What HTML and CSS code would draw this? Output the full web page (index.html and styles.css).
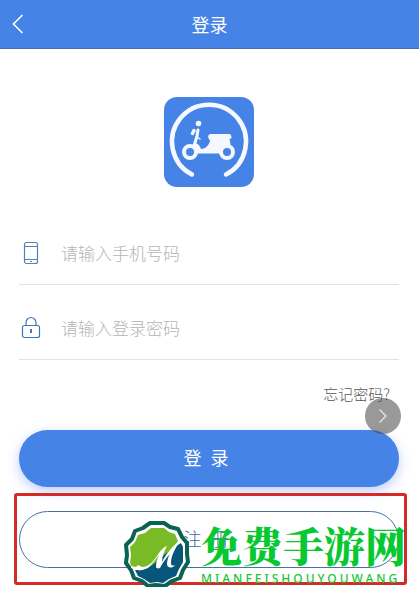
FILE: index.html
```
<!DOCTYPE html>
<html lang="zh-CN">
<head>
    <meta charset="UTF-8">
    <meta name="viewport" content="width=device-width, initial-scale=1.0">
    <title>登录</title>
    <link rel="stylesheet" href="styles.css">
</head>
<body>
    <header class="header">
        <button class="back-button" type="button" aria-label="返回">
            <svg width="12" height="20" viewBox="0 0 12 20"><path d="M10.5 1 1.5 10l9 9" fill="none" stroke="#fff" stroke-width="1.6"/></svg>
        </button>
        <h1 class="title">登录</h1>
    </header>

    <main class="content">
        <svg class="app-logo" width="90" height="90" viewBox="0 0 90 90">
            <rect width="90" height="90" rx="13" fill="#4683e6"/>
            <path d="M28 77.5A37 37 0 1 1 62 77.5" fill="none" stroke="#f5f8fe" stroke-width="4.5" stroke-linecap="round"/>
            <g fill="none" stroke="#f5f8fe" stroke-linecap="round" stroke-linejoin="round">
                <path d="M34 33l-1 6-3 10" stroke-width="3"/>
                <path d="M30 33.500l-1.500 3" stroke-width="3.5"/>
                <path d="M33 40l3 2" stroke-width="1.5"/>
            </g>
            <circle cx="34.5" cy="26.5" r="2.8" fill="#f5f8fe"/>
            <path d="M30 46c4 0 6 3 7 6 5 0 9-5 9-9-2-1-3-6 1-6h18c2 0 2.500 2 2.500 4.500h-2l1 5.500-7 9.500H31z" fill="#f5f8fe"/>
            <circle cx="26" cy="55" r="6" fill="#4683e6" stroke="#f5f8fe" stroke-width="4"/>
            <circle cx="63" cy="55" r="6" fill="#4683e6" stroke="#f5f8fe" stroke-width="4"/>
        </svg>

        <form class="login-form">
            <div class="input-group">
                <label for="phone" aria-label="手机号码">
                    <svg width="24" height="24" viewBox="0 0 24 24" fill="none" stroke="#5580b8" stroke-width="1.2">
                        <rect x="5.5" y="1.5" width="13" height="21" rx="2"/>
                        <path d="M5.5 5.500h13M5.5 18.500h13M11 20.500h2"/>
                    </svg>
                </label>
                <input type="tel" id="phone" placeholder="请输入手机号码">
            </div>
            <div class="input-group">
                <label for="password" aria-label="登录密码">
                    <svg width="24" height="24" viewBox="0 0 24 24" fill="none" stroke="#4376b4" stroke-width="1.2">
                        <rect x="3.5" y="9.5" width="17" height="12" rx="2"/>
                        <path d="M7 9.500V6.500a5 5 0 0 1 10 0v3"/>
                        <path d="M12 13v4" stroke-width="2"/>
                    </svg>
                </label>
                <input type="password" id="password" placeholder="请输入登录密码">
            </div>

            <div class="forgot-row">
                <a class="forgot-link" href="#">忘记密码?</a>
                <button class="next-button" type="button" aria-label="下一步">
                    <svg width="10" height="16" viewBox="0 0 10 16"><path d="M1.5 1.5 8 8l-6.500 6.500" fill="none" stroke="#ddd" stroke-width="1.5"/></svg>
                </button>
            </div>

            <button class="pill-button login-button" type="submit">登&ensp;录</button>

            <div class="highlight">
                <button class="pill-button register-button" type="button">注&ensp;册</button>
                <div class="watermark">
                    <svg width="68" height="66" viewBox="0 0 68 66">
                        <path d="M27 2h14l6 4 8 2 4 8 5 6v11l1 8-5 8-3 8-8 3-7 5-9-1-8 1-6-5-8-3-3-8-5-7 1-8-1-10 6-6 3-8 8-3z" fill="#fff" stroke="#0b6153" stroke-width="4" stroke-linejoin="round"/>
                        <path d="M28 7h13l5 4 6 2 3 7L38 46H9l-2-4 1-8-1-8 5-5 3-7 7-2z" fill="#79bb27"/>
                        <path d="M12 49c10 1 19-5 25-12l16-12 5-3 2 4v15l-4 7-3 7-7 3-6 4-6-1-7 1-6-4-6-3z" fill="#07557a"/>
                        <path d="M8 45l5 1 2-2 4 2c8 0 13-8 17-14 2-3 5-6 8-7-3 5-5 11-5 16 4-8 11-17 19-22-6 8-10 16-10 23 0 3 2 3 4 2-3 4-8 3-8-1 0-3 1-7 3-10-5 5-8 10-10 14-2 1-4 0-4-1 0-4 1-8 3-12-6 7-9 14-17 15-5 1-7-1-11-2z" fill="#fff"/>
                    </svg>
                    <div class="watermark-text">
                        <span class="watermark-name">免费手游网</span>
                        <span class="watermark-pinyin">MIANFEISHOUYOUWANG</span>
                    </div>
                </div>
            </div>
        </form>
    </main>
</body>
</html>
```
FILE: styles.css
```
* {
    box-sizing: border-box;
}
body {
    margin: 0;
    background-color: #fff;
    font-family: "Noto Sans CJK SC", sans-serif;
    font-weight: 300;
}
button, input {
    font-family: inherit;
    font-weight: inherit;
}
.header {
    display: grid;
    grid-template-columns: 36px 1fr 36px;
    align-items: center;
    height: 49px;
    background-color: #4683e6;
    border-bottom: 1px solid #4672b4;
    color: #fff;
}
.back-button {
    display: flex;
    justify-content: center;
    padding: 0;
    border: none;
    background: none;
    cursor: pointer;
}
.title {
    margin: 0;
    font-size: 18px;
    font-weight: 400;
    line-height: 24px;
    text-align: center;
}
.content {
    padding: 48px 20px 8px 19px;
}
.app-logo {
    display: block;
    margin: 0 auto 35px;
}
.input-group {
    display: flex;
    align-items: center;
    gap: 18px;
    height: 63px;
    margin-bottom: 12px;
    border-bottom: 1px solid #e2e2e2;
}
.input-group label {
    display: flex;
}
.input-group input {
    flex: 1;
    min-width: 0;
    padding: 0;
    border: none;
    outline: none;
    background: none;
    font-size: 17px;
    line-height: 24px;
}
.input-group input::placeholder {
    color: #b4b4b4;
}
.forgot-row {
    display: flex;
    justify-content: flex-end;
    position: relative;
    padding: 10px 9px 24px 0;
}
.forgot-link {
    color: #555;
    font-size: 15px;
    line-height: 24px;
    text-decoration: none;
}
.next-button {
    position: absolute;
    right: -2px;
    bottom: -4px;
    display: flex;
    align-items: center;
    justify-content: center;
    width: 36px;
    height: 36px;
    padding: 0;
    border: none;
    border-radius: 50%;
    background-color: rgba(70, 70, 70, 0.55);
    cursor: pointer;
}
.pill-button {
    display: block;
    width: 100%;
    height: 57px;
    padding: 0 6px 4px 0;
    border-radius: 29px;
    font-size: 18px;
    line-height: 24px;
    cursor: pointer;
}
.login-button {
    border: none;
    background-color: #4683e6;
    box-shadow: 0 4px 12px rgba(70, 110, 240, 0.35);
    color: #fff;
    font-weight: 400;
}
.register-button {
    border: 1px solid #4672a4;
    background: none;
    color: #44699c;
}
.highlight {
    position: relative;
    margin: 6px -8px 0 -5px;
    padding: 15px 5px 14px 2px;
    border: 3px solid #d32b25;
    border-radius: 3px;
}
.watermark {
    position: absolute;
    top: 25px;
    right: -2px;
    display: flex;
    gap: 10px;
}
.watermark-text {
    display: flex;
    flex-direction: column;
}
.watermark-name {
    color: #08c832;
    font-family: "Noto Serif CJK SC", "Noto Sans CJK SC", serif;
    font-size: 41px;
    font-weight: 900;
    line-height: 48px;
}
.watermark-pinyin {
    color: #16c832;
    font-family: "Noto Sans", sans-serif;
    font-size: 12px;
    font-weight: 500;
    line-height: 20px;
    letter-spacing: 3px;
}
```
